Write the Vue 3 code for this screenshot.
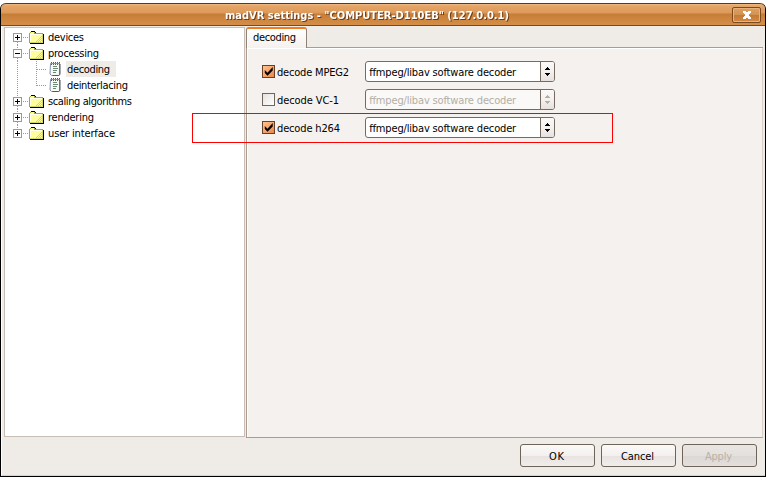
<script setup>
import { ref } from 'vue'

const nodes = [
  { label: 'devices', w: 36, first: true },
  { label: 'processing', w: 51, open: true },
  { label: 'decoding', w: 43, child: true, selected: true },
  { label: 'deinterlacing', w: 61, child: true, last: true },
  { label: 'scaling algorithms', w: 84 },
  { label: 'rendering', w: 46 },
  { label: 'user interface', w: 67, last: true },
]
const decoders = ref([
  { label: 'decode MPEG2', w: 72, on: true },
  { label: 'decode VC-1', w: 62, on: false },
  { label: 'decode h264', w: 63, on: true },
])
const buttons = [
  { label: 'OK', w: 15 },
  { label: 'Cancel', w: 33 },
  { label: 'Apply', w: 27, disabled: true },
]
</script>

<template>
  <div class="screen">
    <div class="window">
      <header class="titlebar">
        <svg class="title" width="286" height="20"><text x="1" y="14" textLength="284">madVR settings - "COMPUTER-D110EB" (127.0.0.1)</text></svg>
        <button class="close">
          <svg width="8" height="8" shape-rendering="crispEdges"><path d="M0 0h3v1h2V0h3v2H7v1H6v2h1v1h1v2H5V7H3v1H0V6h1V5h1V3H1V2H0z" fill="#fff" /></svg>
        </button>
      </header>

      <main class="content">
        <nav class="tree">
          <div v-for="n in nodes" :key="n.label" class="node">
            <svg v-if="!n.child" class="gutter" width="43" height="16" shape-rendering="crispEdges">
              <path v-if="!n.first" d="M12.5 0v4" class="dots" />
              <path v-if="!n.last" d="M12.5 13v3" class="dots" />
              <path d="M18 8.500h5" class="dots" />
              <rect x="8.500" y="4.500" width="8" height="8" fill="#fff" stroke="#9b9a91" />
              <path d="M10 8.500h5" stroke="#000" />
              <path v-if="!n.open" d="M12.500 6v5" stroke="#000" />
              <path d="M24 4h1V3h1V2h4v1h1v1h7v10H24z" fill="#a5a53c" />
              <path d="M26 2h4v1h1v1h7v1h1v10H25v-1h13V5H30V3h-4z" fill="#000" />
              <path d="M25 4h1V3h3v2h9v9H25z" fill="#fdfda0" />
              <path d="M30 4h8v1h-8z" fill="#a5a53c" />
              <path d="M25 5h12v1H26v7h-1z" fill="#ffffe6" />
              <path d="M30 13.500h7M32 11.500h5M34 9.500h3M36 7.500h1M31 12.500h6M33 10.500h4M35 8.500h2" stroke="#f9bd93" stroke-dasharray="1 1" />
              <path d="M37 5h1v9H25v-1h12z" fill="#d7d768" />
            </svg>
            <svg v-else class="gutter" width="61" height="16">
              <path d="M12.500 0v16" class="dots" />
              <path :d="n.last ? 'M31.500 0v9M32 8.500h10' : 'M31.500 0v16M32 8.500h10'" class="dots" />
              <path d="M45.500 2.500h9v11l-1 1h-7l-1.500-1.500z" fill="#f7f9f7" stroke="#8492ab" />
              <path d="M55 3v10.500l-1.500 1h-6" fill="none" stroke="#55555c" />
              <path d="M46 2.500h9" stroke="#bd8a35" />
              <path d="M46 1.500h9M46 3.500h9" stroke="#705a28" stroke-dasharray="1 1" />
              <path d="M48 5.500h4M48 7.500h5M48 9.500h4M48 11.500h3" stroke="#6c8a74" />
            </svg>
            <span class="label" :class="{ selected: n.selected, child: n.child }">
              <svg :width="n.w + 2" height="16"><text x="0" y="12" :textLength="n.w">{{ n.label }}</text></svg>
            </span>
          </div>
        </nav>

        <section class="tabs">
          <div class="tabstrip">
            <div class="tab"><svg width="46" height="16"><text x="0" y="12" textLength="43">decoding</text></svg></div>
            <div class="rest"></div>
          </div>
          <div class="panel">
            <div v-for="d in decoders" :key="d.label" class="row">
              <span class="check" :class="{ on: d.on }">
                <svg v-if="d.on" width="11" height="11"><path d="M2 4.500l2.500 2.500L9.500 1.500v3L4.500 9.500 2 7z" fill="#000" stroke="#000" stroke-width=".4" /></svg>
              </span>
              <span class="name"><svg width="80" height="16"><text x="0" y="12" :textLength="d.w">{{ d.label }}</text></svg></span>
              <div class="select" :class="{ off: !d.on }">
                <svg class="value" width="174" height="19"><text x="3" y="14" textLength="147">ffmpeg/libav software decoder</text></svg>
                <span class="spin">
                  <svg width="5" height="9" shape-rendering="crispEdges"><path d="M2 0h1v1h1v1h1v1H0V2h1V1h1zM0 6h5v1H4v1H3v1H2V8H1V7H0z" /></svg>
                </span>
              </div>
            </div>
          </div>
        </section>
      </main>

      <footer class="actions">
        <button v-for="b in buttons" :key="b.label" class="btn" :class="{ off: b.disabled }">
          <svg :width="b.w + 1" height="16"><text x="0" y="12" :textLength="b.w">{{ b.label }}</text></svg>
        </button>
      </footer>
    </div>
    <div class="highlight"></div>
  </div>
</template>

<style>
body { margin: 0; background: #fff; }
</style>

<style scoped>
* { box-sizing: border-box; }
.screen {
  position: relative; width: 766px; height: 477px; padding-top: 3px;
  font-family: "DejaVu Sans Condensed", "DejaVu Sans", sans-serif; font-stretch: condensed; font-size: 11px; color: #000;
}
svg { display: block; flex: none; overflow: visible; }
text { fill: currentColor; }
button { font: inherit; padding: 0; }
.window {
  display: flex; flex-direction: column; height: 474px; background: #efebe7;
  border: 1px solid #000; border-top: 0; border-radius: 6px 6px 0 0; overflow: hidden;
}
.titlebar {
  display: flex; align-items: center; justify-content: flex-end; height: 23px; flex: none;
  padding-right: 4px; border-top: 1px solid #583a22; border-bottom: 1px solid #794a20; border-radius: 5px 5px 0 0;
  background: linear-gradient(#efb982 0, #e5a567 2px, #dc995b 9px, #c67e37 10px, #d58e48 21px);
}
.title { margin-right: 222px; color: #fff; font-weight: bold; filter: drop-shadow(1px 1px 0 #6d3c12); }
.close {
  width: 29px; height: 16px; display: flex; align-items: center; justify-content: center;
  border: 1px solid #7b4a20; border-radius: 2px; box-shadow: inset 0 0 0 1px #e8b27c;
  background: linear-gradient(#e0a064, #d29250 48%, #c27a35 52%, #d28a44);
}
.content { display: flex; height: 412px; flex: none; padding: 1px 2px 0; border-left: 1px solid #fff; }
.tree { width: 241px; height: 410px; margin-right: 1px; padding-top: 1px; background: #fff; border: 1px solid #c9beb5; flex: none; }
.node { display: flex; height: 16px; }
.dots { stroke: #999; stroke-width: 1; stroke-dasharray: 1 1; fill: none; }
.label { height: 16px; }
.label.child { padding-left: 1px; }
.label.selected { background: #efebe7; padding-right: 4px; }
.tabs { flex: 1; display: flex; flex-direction: column; height: 411px; }
.tabstrip { display: flex; height: 21px; flex: none; }
.tab {
  width: 61px; padding: 0 0 0 6px; border: 1px solid #8f8176; border-top: 2px solid #f57b20; border-bottom: 0;
  border-radius: 3px 3px 0 0; background: linear-gradient(#fff, #f5f1ee); box-shadow: inset 1px 0 #fff;
}
.rest { flex: 1; border-bottom: 1px solid #ad9b90; }
.panel {
  flex: 1; display: flex; flex-direction: column; gap: 7px; padding: 13px 0 0 15px; background: #f5f1ee;
  border: 1px solid #ad9b90; border-top: 0; border-right-color: #d8d0c9; box-shadow: inset 1px 1px #fff;
}
.row { display: flex; align-items: center; height: 21px; }
.check {
  width: 13px; height: 13px; border: 1px solid #6f675e; background: linear-gradient(135deg, #e5e3df, #fff); flex: none;
}
.check.on { border-color: #6b4126; background: linear-gradient(135deg, #ffc391, #ee8548); }
.name { width: 88px; padding-left: 2px; margin-right: 2px; flex: none; }
.select {
  display: flex; width: 190px; height: 21px; border: 1px solid #756b61; border-radius: 3px; background: #fff; overflow: hidden;
}
.spin {
  width: 14px; height: 19px; display: flex; align-items: center; justify-content: center;
  border-left: 1px solid #756b61; background: linear-gradient(#fbfaf9, #f4f1ef 50%, #e7e1de);
}
.select.off { color: #b2afa5; background: #faf9f8; }
.spin svg { fill: currentColor; }
.actions { display: flex; justify-content: flex-end; gap: 6px; padding: 6px 8px 0 0; flex: 1; border-left: 1px solid #fff; border-bottom: 1px solid #d7d1ca; }
.btn {
  display: flex; align-items: center; justify-content: center; width: 75px; height: 23px; padding-right: 2px; color: #000;
  border: 1px solid #6e6458; border-radius: 3px;
  background: linear-gradient(#fbfaf9 0, #f3f0ee 50%, #e8e3e0 51%, #f0edeb 100%);
}
.btn.off { color: #b8b2a5; background: linear-gradient(#e9e5e3 0, #e4e0de 50%, #dcd7d4 51%, #e3dfdc 100%); }
.highlight { position: absolute; left: 192px; top: 113px; width: 421px; height: 30px; border: 1px solid #f00; }
</style>
